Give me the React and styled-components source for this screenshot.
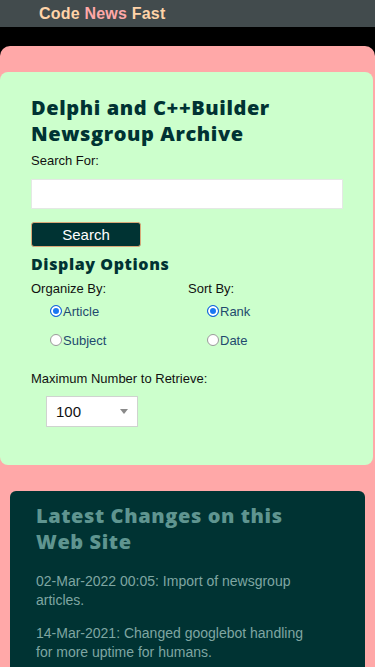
import React from 'react';
import styled, { createGlobalStyle } from 'styled-components';

const GlobalStyle = createGlobalStyle`
  html, body {
    margin: 0;
    padding: 0;
    background: #000;
    font-family: "Liberation Sans", Arial, sans-serif;
  }
`;

const changes = [
  '02-Mar-2022 00:05: Import of newsgroup articles.',
  '14-Mar-2021: Changed googlebot handling for more uptime for humans.',
];

const App = () => (
  <>
    <GlobalStyle />
    <TopBar>
      <Brand>
        Code <BrandAccent>News</BrandAccent> Fast
      </Brand>
    </TopBar>
    <Main>
      <SearchCard>
        <Title>Delphi and C++Builder Newsgroup Archive</Title>
        <FieldLabel>Search For:</FieldLabel>
        <SearchInput type="text" />
        <SearchButton>Search</SearchButton>
        <SubTitle>Display Options</SubTitle>
        <OptionsGrid>
          <OptionGroup>
            <FieldLabel>Organize By:</FieldLabel>
            <RadioRow>
              <Radio checked /> Article
            </RadioRow>
            <RadioRow>
              <Radio /> Subject
            </RadioRow>
          </OptionGroup>
          <OptionGroup>
            <FieldLabel>Sort By:</FieldLabel>
            <RadioRow>
              <Radio checked /> Rank
            </RadioRow>
            <RadioRow>
              <Radio /> Date
            </RadioRow>
          </OptionGroup>
        </OptionsGrid>
        <FieldLabel>Maximum Number to Retrieve:</FieldLabel>
        <SelectBox>
          <span>100</span>
          <Caret />
        </SelectBox>
      </SearchCard>
      <ChangesCard>
        <ChangesTitle>Latest Changes on this Web Site</ChangesTitle>
        {changes.map((c) => (
          <ChangeItem key={c}>{c}</ChangeItem>
        ))}
      </ChangesCard>
    </Main>
  </>
);

const TopBar = styled.header`
  height: 27px;
  background: #424b4d;
  display: flex;
  align-items: center;
  padding-left: 39px;
`;

const Brand = styled.div`
  font-weight: bold;
  font-size: 16px;
  letter-spacing: 0.2px;
  color: #ffd3a8;
`;

const BrandAccent = styled.span`
  color: #ffa8a8;
`;

const Main = styled.main`
  margin-top: 19px;
  background: #ffa8a8;
  border-radius: 10px 10px 0 0;
  padding: 26px 0 30px;
  min-height: 600px;
`;

const SearchCard = styled.section`
  background: #ccffcc;
  margin-right: 2px;
  border-radius: 8px;
  padding: 23px 30px 38px 31px;
`;

const Title = styled.h1`
  margin: 0 0 6px;
  font-family: "Open Sans", sans-serif;
  font-weight: 800;
  font-size: 20px;
  line-height: 26px;
  letter-spacing: 0.6px;
  color: #003333;
`;

const FieldLabel = styled.div`
  font-size: 13px;
  line-height: 16px;
  color: #111;
`;

const SearchInput = styled.input`
  display: block;
  box-sizing: border-box;
  width: 100%;
  height: 30px;
  margin: 10px 0 13px;
  border: 1px solid #e4e8e4;
  background: #fff;
  outline: none;
`;

const SearchButton = styled.button`
  display: block;
  width: 110px;
  height: 25px;
  background: #003333;
  color: #fff;
  border: 1px solid #d8a878;
  border-radius: 3px;
  font-family: "Liberation Sans", Arial, sans-serif;
  font-size: 15px;
  padding: 0;
`;

const SubTitle = styled.h2`
  margin: 7px 0 7px;
  font-family: "Open Sans", sans-serif;
  font-weight: 800;
  font-size: 16px;
  line-height: 20px;
  letter-spacing: 0.6px;
  color: #003333;
`;

const OptionsGrid = styled.div`
  display: grid;
  grid-template-columns: 157px 1fr;
  margin-bottom: 23px;
`;

const OptionGroup = styled.div`
  display: flex;
  flex-direction: column;
`;

const RadioRow = styled.label`
  display: flex;
  align-items: center;
  margin-top: 6px;
  margin-left: 19px;
  height: 16px;
  font-size: 13px;
  color: #1f4a6e;

  & + & {
    margin-top: 13px;
  }
`;

const Radio = styled.span`
  box-sizing: border-box;
  width: 12px;
  height: 12px;
  border-radius: 50%;
  margin-right: 1px;
  background: ${({ checked }) => (checked ? '#1b78f2' : '#fff')};
  border: ${({ checked }) => (checked ? '1px solid #1565d8' : '1px solid #9a9a9a')};
  box-shadow: ${({ checked }) => (checked ? 'inset 0 0 0 2px #fff, inset 0 0 0 3px #1b78f2' : 'none')};
`;

const SelectBox = styled.div`
  box-sizing: border-box;
  display: flex;
  align-items: center;
  justify-content: space-between;
  width: 92px;
  height: 31px;
  margin: 9px 0 0 15px;
  padding: 0 9px 0 9px;
  background: #fff;
  border: 1px solid #cfd3cf;
  font-size: 15px;
  color: #111;
`;

const Caret = styled.span`
  width: 0;
  height: 0;
  border-left: 4px solid transparent;
  border-right: 4px solid transparent;
  border-top: 5px solid #8a8a8a;
`;

const ChangesCard = styled.section`
  margin: 26px 10px 0;
  background: #003333;
  border-radius: 6px;
  padding: 12px 44px 20px 26px;
`;

const ChangesTitle = styled.h2`
  margin: 0 0 17px;
  font-family: "Open Sans", sans-serif;
  font-weight: 800;
  font-size: 20px;
  line-height: 26px;
  letter-spacing: 0.6px;
  color: #5f9590;
`;

const ChangeItem = styled.p`
  margin: 0 0 14px;
  font-size: 14px;
  line-height: 19px;
  color: #7fa6a2;
`;

export default App;
